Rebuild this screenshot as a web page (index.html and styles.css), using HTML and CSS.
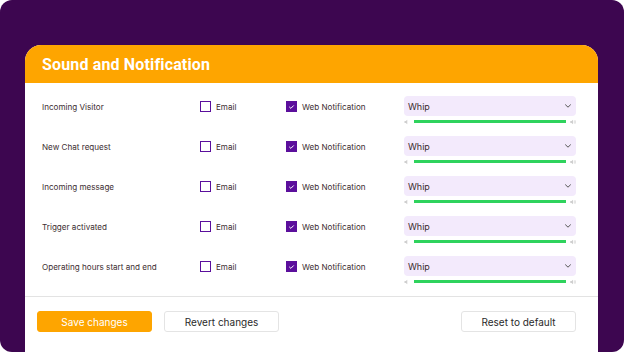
FILE: index.html
```html
<!DOCTYPE html>
<html>
<head>
<meta charset="utf-8">
<link rel="stylesheet" href="styles.css">
</head>
<body>
<div class="frame">
  <div class="card">
    <div class="card-header"><h1 class="title">Sound and Notification</h1></div>
    <div class="rows">
      <div class="row">
        <div class="label">Incoming Visitor</div>
        <div class="check"><span class="box"></span>Email</div>
        <div class="check"><span class="box on"><svg viewBox="0 0 10 10"><path d="M2.8 5.1 L4.3 6.5 L7.2 3.6" fill="none" stroke="#fff" stroke-width="1.1" stroke-linecap="round" stroke-linejoin="round"/></svg></span>Web Notification</div>
        <div class="sound">
          <div class="select"><span>Whip</span><svg class="chev" viewBox="0 0 8 6"><path d="M1.5 1.8 L4 4.2 L6.5 1.8" fill="none" stroke="#555" stroke-width="1" stroke-linecap="round" stroke-linejoin="round"/></svg></div>
          <div class="volume"><svg class="spk" viewBox="0 0 6 6"><path d="M0.5 2h1.3L3.3 0.8v4.4L1.8 4H0.5z" fill="#cfcfcf"/></svg><div class="bar"></div><svg class="spk" viewBox="0 0 6 6"><path d="M0.3 2h1.3L3 0.8v4.4L1.6 4H0.3z" fill="#cfcfcf"/><path d="M4 1.8q0.9 1.2 0 2.4M4.8 1q1.6 2 0 4" fill="none" stroke="#cfcfcf" stroke-width="0.6"/></svg></div>
        </div>
      </div>
      <div class="row">
        <div class="label">New Chat request</div>
        <div class="check"><span class="box"></span>Email</div>
        <div class="check"><span class="box on"><svg viewBox="0 0 10 10"><path d="M2.8 5.1 L4.3 6.5 L7.2 3.6" fill="none" stroke="#fff" stroke-width="1.1" stroke-linecap="round" stroke-linejoin="round"/></svg></span>Web Notification</div>
        <div class="sound">
          <div class="select"><span>Whip</span><svg class="chev" viewBox="0 0 8 6"><path d="M1.5 1.8 L4 4.2 L6.5 1.8" fill="none" stroke="#555" stroke-width="1" stroke-linecap="round" stroke-linejoin="round"/></svg></div>
          <div class="volume"><svg class="spk" viewBox="0 0 6 6"><path d="M0.5 2h1.3L3.3 0.8v4.4L1.8 4H0.5z" fill="#cfcfcf"/></svg><div class="bar"></div><svg class="spk" viewBox="0 0 6 6"><path d="M0.3 2h1.3L3 0.8v4.4L1.6 4H0.3z" fill="#cfcfcf"/><path d="M4 1.8q0.9 1.2 0 2.4M4.8 1q1.6 2 0 4" fill="none" stroke="#cfcfcf" stroke-width="0.6"/></svg></div>
        </div>
      </div>
      <div class="row">
        <div class="label">Incoming message</div>
        <div class="check"><span class="box"></span>Email</div>
        <div class="check"><span class="box on"><svg viewBox="0 0 10 10"><path d="M2.8 5.1 L4.3 6.5 L7.2 3.6" fill="none" stroke="#fff" stroke-width="1.1" stroke-linecap="round" stroke-linejoin="round"/></svg></span>Web Notification</div>
        <div class="sound">
          <div class="select"><span>Whip</span><svg class="chev" viewBox="0 0 8 6"><path d="M1.5 1.8 L4 4.2 L6.5 1.8" fill="none" stroke="#555" stroke-width="1" stroke-linecap="round" stroke-linejoin="round"/></svg></div>
          <div class="volume"><svg class="spk" viewBox="0 0 6 6"><path d="M0.5 2h1.3L3.3 0.8v4.4L1.8 4H0.5z" fill="#cfcfcf"/></svg><div class="bar"></div><svg class="spk" viewBox="0 0 6 6"><path d="M0.3 2h1.3L3 0.8v4.4L1.6 4H0.3z" fill="#cfcfcf"/><path d="M4 1.8q0.9 1.2 0 2.4M4.8 1q1.6 2 0 4" fill="none" stroke="#cfcfcf" stroke-width="0.6"/></svg></div>
        </div>
      </div>
      <div class="row">
        <div class="label">Trigger activated</div>
        <div class="check"><span class="box"></span>Email</div>
        <div class="check"><span class="box on"><svg viewBox="0 0 10 10"><path d="M2.8 5.1 L4.3 6.5 L7.2 3.6" fill="none" stroke="#fff" stroke-width="1.1" stroke-linecap="round" stroke-linejoin="round"/></svg></span>Web Notification</div>
        <div class="sound">
          <div class="select"><span>Whip</span><svg class="chev" viewBox="0 0 8 6"><path d="M1.5 1.8 L4 4.2 L6.5 1.8" fill="none" stroke="#555" stroke-width="1" stroke-linecap="round" stroke-linejoin="round"/></svg></div>
          <div class="volume"><svg class="spk" viewBox="0 0 6 6"><path d="M0.5 2h1.3L3.3 0.8v4.4L1.8 4H0.5z" fill="#cfcfcf"/></svg><div class="bar"></div><svg class="spk" viewBox="0 0 6 6"><path d="M0.3 2h1.3L3 0.8v4.4L1.6 4H0.3z" fill="#cfcfcf"/><path d="M4 1.8q0.9 1.2 0 2.4M4.8 1q1.6 2 0 4" fill="none" stroke="#cfcfcf" stroke-width="0.6"/></svg></div>
        </div>
      </div>
      <div class="row">
        <div class="label">Operating hours start and end</div>
        <div class="check"><span class="box"></span>Email</div>
        <div class="check"><span class="box on"><svg viewBox="0 0 10 10"><path d="M2.8 5.1 L4.3 6.5 L7.2 3.6" fill="none" stroke="#fff" stroke-width="1.1" stroke-linecap="round" stroke-linejoin="round"/></svg></span>Web Notification</div>
        <div class="sound">
          <div class="select"><span>Whip</span><svg class="chev" viewBox="0 0 8 6"><path d="M1.5 1.8 L4 4.2 L6.5 1.8" fill="none" stroke="#555" stroke-width="1" stroke-linecap="round" stroke-linejoin="round"/></svg></div>
          <div class="volume"><svg class="spk" viewBox="0 0 6 6"><path d="M0.5 2h1.3L3.3 0.8v4.4L1.8 4H0.5z" fill="#cfcfcf"/></svg><div class="bar"></div><svg class="spk" viewBox="0 0 6 6"><path d="M0.3 2h1.3L3 0.8v4.4L1.6 4H0.3z" fill="#cfcfcf"/><path d="M4 1.8q0.9 1.2 0 2.4M4.8 1q1.6 2 0 4" fill="none" stroke="#cfcfcf" stroke-width="0.6"/></svg></div>
        </div>
      </div>
    </div>
    <div class="footer">
      <button class="btn primary">Save changes</button>
      <button class="btn">Revert changes</button>
      <button class="btn push">Reset to default</button>
    </div>
  </div>
</div>
</body>
</html>
```

FILE: styles.css
```css
* { box-sizing: border-box; }
html, body { margin: 0; padding: 0; background: #fff; }
body { font-family: Inter, "Noto Sans", sans-serif; }
.frame {
  width: 624px;
  height: 352px;
  background: #3d0650;
  border-radius: 12px;
  overflow: hidden;
  padding: 45px 26px 0 25px;
}
.card {
  width: 573px;
  height: 307px;
  background: #fff;
  border-radius: 16px 16px 0 0;
  overflow: hidden;
}
.card-header {
  height: 38px;
  background: #fea500;
  display: flex;
  align-items: center;
  padding-left: 17px;
}
.title {
  margin: 0;
  font-family: Roboto, sans-serif;
  font-weight: 700;
  font-size: 16px;
  color: #fff;
  letter-spacing: 0.15px;
}
.rows {
  padding: 0 22px 13px 17px;
  border-bottom: 1px solid #e3e3e3;
}
.row {
  height: 40px;
  padding-top: 13px;
  display: grid;
  grid-template-columns: 158px 86px 118px 172px;
  align-items: start;
}
.label, .check {
  height: 20px;
  padding-top: 1px;
  display: flex;
  align-items: center;
  font-size: 8.1px;
  color: #3d2e31;
}
.check .box {
  width: 11px;
  height: 11px;
  border: 1.5px solid #5b0f9c;
  margin-right: 5px;
  display: flex;
  align-items: center;
  justify-content: center;
}
.check .box.on { background: #5b0f9c; }
.check .box svg { width: 10px; height: 10px; }
.select {
  height: 20px;
  background: #f3eafc;
  border-radius: 4px;
  display: flex;
  align-items: center;
  justify-content: space-between;
  padding: 0 4px 0 4px;
  font-size: 9px;
  color: #3a2b2e;
}
.chev { width: 8px; height: 6px; }
.volume {
  margin-top: 3px;
  height: 5px;
  display: flex;
  align-items: center;
  gap: 4px;
}
.spk { width: 6px; height: 6px; flex: none; }
.bar {
  flex: 1;
  height: 3px;
  background: #2fd35d;
}
.footer {
  display: flex;
  align-items: center;
  padding: 14px 22px 0 12px;
  gap: 12px;
}
.btn {
  height: 21px;
  width: 115px;
  border: 1px solid #e4e4e4;
  border-radius: 3px;
  background: #fff;
  font-family: Inter, sans-serif;
  font-size: 10px;
  color: #2a2a2a;
  padding: 0;
}
.btn.primary {
  background: #fea500;
  border-color: #fea500;
  color: #fff;
}
.btn.push { margin-left: auto; }
```
